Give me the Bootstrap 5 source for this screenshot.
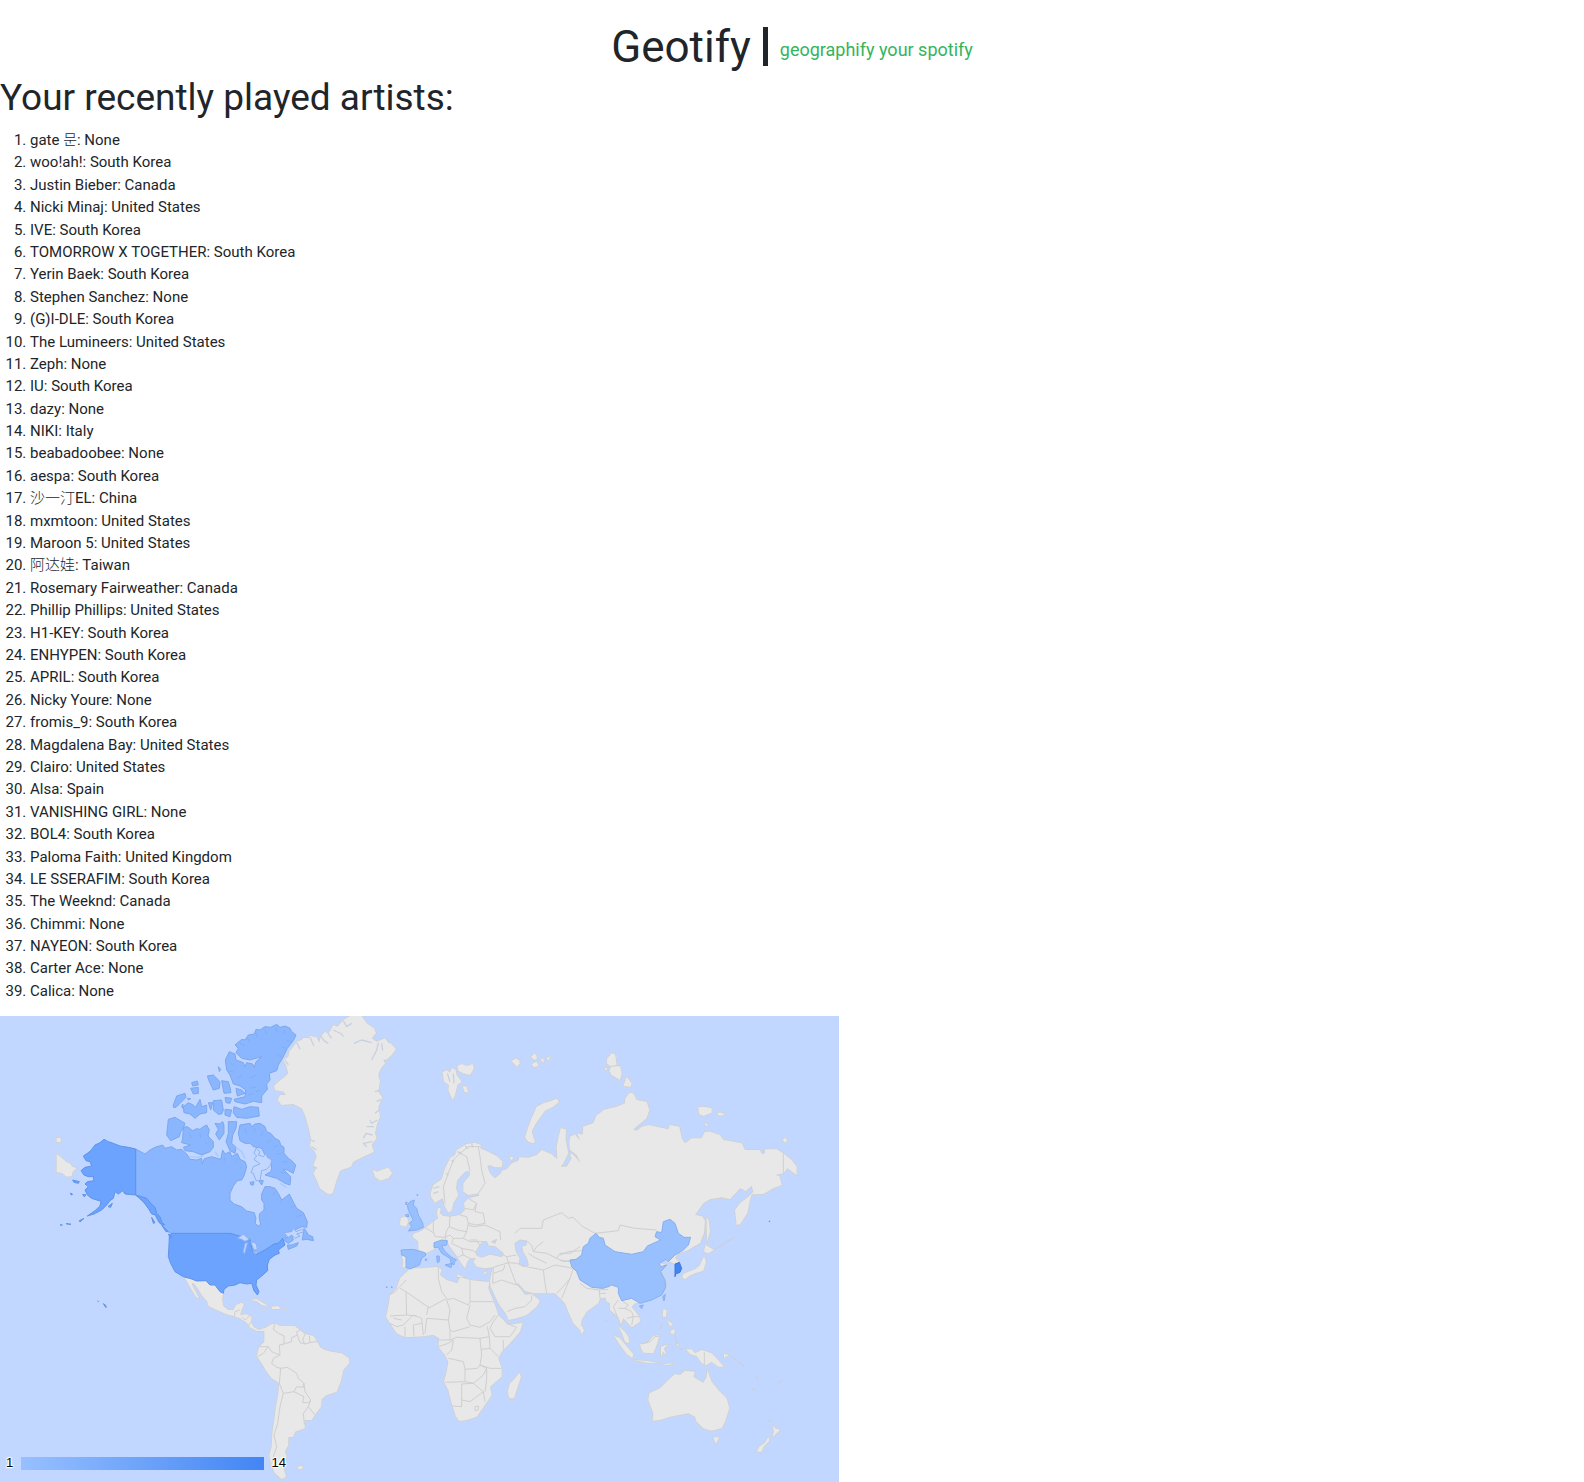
<!DOCTYPE html>
<html lang="en">
<head>
<meta charset="utf-8">
<meta name="viewport" content="width=device-width, initial-scale=1">
<title>Geotify</title>
<link href="https://cdn.jsdelivr.net/npm/bootstrap@5.3.0/dist/css/bootstrap.min.css" rel="stylesheet">
<style>
body{font-family:Roboto,"Noto Sans CJK KR","Noto Sans CJK SC",sans-serif;font-size:15px;line-height:22px;color:#212529}
.brand-bar{padding-top:20px;height:72px}
.brand-name{font-size:44px;line-height:54px;padding-top:2px}
.brand-rule{width:5px;height:39px;background:#212529;margin:0 12px}
.tagline{font-size:18px;line-height:24px;color:#34b45c;padding-top:8px}
.list-title{font-size:37px;line-height:44px;margin-bottom:9px;padding-top:4px}
.artist-list{padding-left:30px;min-height:873px;margin-bottom:14px}
.artist-list [lang=zh]{font-family:"Noto Sans CJK SC",sans-serif;font-weight:300;line-height:1}
.artist-list [lang=ko]{font-family:"Noto Sans CJK KR",sans-serif;font-weight:300;line-height:1}
.geo-map{max-width:839px;background:#c2d7ff}
.geo-map svg{display:block;width:100%;height:auto}
.coast{fill:#e8e8e8;stroke:#cfd0d3;stroke-width:5;stroke-linejoin:round}
.fill-land{fill:#e8e8e8}
.line{fill:none;stroke:#cfcfcf;stroke-width:3;stroke-linejoin:round}
.fjord{fill:none;stroke:#c8d0e0;stroke-width:4;stroke-linejoin:round}
.channel{fill:none;stroke:#a9c8ff;stroke-width:4;stroke-linejoin:round}
.inlet{fill:none;stroke:#7da7ec;stroke-width:2}
.sea{fill:#c2d7ff;stroke:#cfd0d3;stroke-width:3}
.lake{fill:#c2d7ff;stroke:#8fb2ec;stroke-width:3}
.ca{fill:#8ab6ff;stroke:#7da7ec;stroke-width:3;stroke-linejoin:round}
.us{fill:#6ba3ff;stroke:#5e93ea;stroke-width:3;stroke-linejoin:round}
.cn{fill:#98c0ff;stroke:#88afee;stroke-width:3;stroke-linejoin:round}
.kr{fill:#4285f4;stroke:#3c79de;stroke-width:3}
.legend-row{left:6px;bottom:12px;width:280px;gap:8px;font:13px/14px "Liberation Sans",sans-serif;color:#000}
.legend-row span{text-shadow:0 0 2px #fff,1px 1px 1px #fff,-1px -1px 1px #fff,1px -1px 1px #fff,-1px 1px 1px #fff}
.legend-scale{height:13px;background:linear-gradient(90deg,#98c0ff,#4285f4)}
</style>
<script src="https://cdn.jsdelivr.net/npm/bootstrap@5.3.0/dist/js/bootstrap.bundle.min.js"></script>
</head>
<body>
<header class="brand-bar d-flex justify-content-center">
  <div class="d-flex align-items-center">
    <h1 class="brand-name fw-normal mb-0">Geotify</h1>
    <div class="brand-rule"></div>
    <div class="tagline">geographify your spotify</div>
  </div>
</header>
<main>
<h2 class="list-title fw-normal">Your recently played artists:</h2>
<ol class="artist-list d-flex flex-column justify-content-between">
<li>gate <span lang="ko">문</span>: None</li>
<li>woo!ah!: South Korea</li>
<li>Justin Bieber: Canada</li>
<li>Nicki Minaj: United States</li>
<li>IVE: South Korea</li>
<li>TOMORROW X TOGETHER: South Korea</li>
<li>Yerin Baek: South Korea</li>
<li>Stephen Sanchez: None</li>
<li>(G)I-DLE: South Korea</li>
<li>The Lumineers: United States</li>
<li>Zeph: None</li>
<li>IU: South Korea</li>
<li>dazy: None</li>
<li>NIKI: Italy</li>
<li>beabadoobee: None</li>
<li>aespa: South Korea</li>
<li><span lang="zh">沙一汀</span>EL: China</li>
<li>mxmtoon: United States</li>
<li>Maroon 5: United States</li>
<li><span lang="zh">阿达娃</span>: Taiwan</li>
<li>Rosemary Fairweather: Canada</li>
<li>Phillip Phillips: United States</li>
<li>H1-KEY: South Korea</li>
<li>ENHYPEN: South Korea</li>
<li>APRIL: South Korea</li>
<li>Nicky Youre: None</li>
<li>fromis_9: South Korea</li>
<li>Magdalena Bay: United States</li>
<li>Clairo: United States</li>
<li>Alsa: Spain</li>
<li>VANISHING GIRL: None</li>
<li>BOL4: South Korea</li>
<li>Paloma Faith: United Kingdom</li>
<li>LE SSERAFIM: South Korea</li>
<li>The Weeknd: Canada</li>
<li>Chimmi: None</li>
<li>NAYEON: South Korea</li>
<li>Carter Ace: None</li>
<li>Calica: None</li>
</ol>
<div class="geo-map position-relative">
<svg viewBox="0 18 2517 1398" role="img" aria-label="World map of artists by country">
<defs>
<g id="land">
  <!-- Greenland, Iceland -->
  <g transform="translate(450 0)">
    <path d="M372 228 385 215 405 200 415 190 408 165 400 150 415 140 418 125 430 110 440 95 455 90 460 83 475 85 480 78 500 82 508 98 513 78 525 65 535 72 550 45 562 50 580 30 600 18 635 18 650 40 672 55 678 70 665 85 680 95 705 85 715 98 725 102 738 118 725 135 708 150 700 148 705 160 690 180 685 195 690 215 685 245 697 262 685 290 690 320 680 345 675 370 680 385 665 405 672 425 640 440 610 455 603 470 590 475 570 482 560 510 548 550 538 553 530 550 510 535 500 510 490 490 498 478 490 465 500 440 495 425 480 410 483 385 475 350 465 315 455 295 430 282 395 285 383 270 390 255 408 255 400 245 375 240ZM668 478 680 485 700 478 715 473 727 490 715 505 690 512 675 500Z"/>
  </g>
  <!-- Central and South America -->
  <g transform="translate(450 570)">
    <path d="M105 235 120 237 140 243 168 242 180 255 195 255 210 275 220 280 216 298 220 318 235 330 250 330 258 315 275 308 282 312 275 330 270 345 290 343 305 350 303 365 310 380 325 390 345 385 340 393 320 393 300 382 290 368 270 355 250 348 230 343 200 330 175 318 172 305 155 285 145 268 130 248 125 252 148 296 138 290 122 265Z"/>
    <path d="M300 300 320 297 355 318 335 315 320 303ZM365 320 385 318 392 326 365 328ZM335 328 345 328 345 330ZM402 326 410 327 408 330ZM443 800 460 798 455 807 445 808Z"/>
    <path d="M375 370 390 378 410 377 435 378 450 390 465 402 490 408 502 425 510 442 525 450 545 455 575 460 597 475 598 490 580 510 572 545 560 575 530 585 515 598 513 620 495 645 485 660 465 660 463 672 465 685 435 695 430 710 415 712 415 735 405 755 410 770 400 800 408 830 395 838 375 820 362 790 358 765 365 740 367 700 372 665 378 620 385 580 388 550 365 535 350 515 335 490 320 468 328 440 343 425 343 392 330 388 345 385 360 375Z"/>
  </g>
  <!-- Chukotka west of the date line -->
  <path d="M170 432 185 443 200 457 210 460 217 470 230 475 218 485 215 498 200 500 185 488 170 487ZM170 383 182 383 182 396 170 396Z"/>
  <!-- Europe, west Russia, Middle East, India -->
  <g transform="translate(1110 90)">
    <path d="M182 460 190 435 215 418 225 385 240 355 255 345 260 330 290 312 315 308 333 315 330 325 350 333 380 348 398 365 395 382 375 382 358 375 352 380 360 400 375 415 393 400 395 392 410 388 425 370 445 362 448 352 475 353 500 345 515 330 545 343 562 358 560 320 567 285 572 265 588 268 587 300 595 340 580 370 572 380 590 380 605 355 600 345 605 340 620 355 632 370 620 345 600 330 598 310 600 290 615 283 630 302 622 280 640 285 648 305 655 325 660 325 650 290 640 260 670 250 680 225 720 205 760 260 760 700 720 770 690 775 685 790 650 815 635 840 630 870 610 850 595 815 585 790 570 775 555 760 530 760 490 760 465 753 445 730 438 732 455 750 465 765 485 762 490 765 510 782 500 800 470 825 440 835 415 840 410 825 385 790 362 740 360 725 365 695 370 682 345 685 320 680 310 665 318 655 300 655 292 665 285 685 275 672 262 650 240 620 232 605 195 610 192 628 168 640 145 635 145 605 128 590 130 582 155 572 170 560 190 545 205 535 200 520 205 503 212 505 210 520 220 528 240 530 270 525 285 510 282 490 295 475 328 467 325 460 295 465 280 455 280 430 300 405 298 392 285 395 262 420 258 445 265 465 250 490 245 512 235 518 225 500 218 475 195 488 183 470Z"/>
    <path d="M92 535 110 528 115 545 108 560 90 555ZM95 643 108 645 108 682 97 682 100 665Z"/>
    <path d="M218 97 230 90 240 98 245 85 256 88 260 105 275 125 262 135 255 165 248 180 235 150 237 135 222 125ZM262 78 275 72 290 78 308 72 312 85 300 105 280 100 265 92ZM278 137 290 140 295 158 283 155ZM425 62 440 55 450 70 440 80ZM483 50 495 40 502 55 492 60ZM485 72 500 65 505 78 492 82ZM510 60 520 55 522 68ZM530 55 542 48 535 62Z"/>
    <path d="M465 292 475 260 485 235 500 200 520 190 545 182 560 176 567 185 550 200 525 212 505 240 495 255 485 275 495 305 490 310 475 305ZM418 350 430 352 425 362ZM260 703 285 712 262 710ZM338 700 352 694 345 703ZM628 863 635 855 642 872 635 882Z"/>
  </g>
  <!-- Africa -->
  <g transform="translate(1110 690)">
    <path d="M110 95 120 85 155 85 205 80 215 90 210 105 230 120 262 130 270 112 300 120 345 125 358 125 355 145 375 195 385 225 405 245 415 255 458 248 450 275 420 310 395 335 385 355 395 385 395 410 360 440 365 465 345 495 320 530 290 540 268 543 258 530 245 490 235 450 222 425 230 395 235 365 225 345 205 320 208 295 190 285 165 288 140 290 105 292 80 280 60 250 48 230 55 200 60 165 80 145 90 115ZM448 398 453 410 440 450 432 475 418 475 413 455 420 430 435 415Z"/>
  </g>
  <!-- Siberia -->
  <g transform="translate(1530 0)">
    <path d="M555 615 580 580 600 568 635 562 660 568 690 535 703 540 705 545 725 527 730 545 715 560 690 580 675 600 680 645 690 643 712 610 720 570 725 553 760 552 790 535 815 525 808 498 795 495 820 490 832 475 860 495 860 470 845 450 820 430 800 418 765 418 765 430 755 432 750 420 705 420 695 400 640 390 630 375 600 365 585 365 575 385 545 385 525 400 515 385 508 350 480 345 475 358 440 350 415 345 395 350 380 362 370 358 410 325 418 300 410 275 380 270 370 250 358 248 345 268 345 280 320 290 280 300 258 320 258 338 220 350 200 560 300 720 550 700 580 620Z"/>
    <path d="M292 145 305 130 315 132 320 165 300 168 290 160ZM303 170 330 168 335 190 330 210 305 195 298 182ZM340 228 350 200 365 220 362 230ZM565 292 580 290 605 295 605 308 580 318 567 312ZM620 308 635 308 645 315 628 317ZM583 340 593 342 590 350ZM818 390 825 383 832 390 825 398ZM282 175 290 173 292 182ZM15 152 30 150 22 165Z"/>
  </g>
  <!-- East and South-East Asia, Oceania -->
  <g transform="translate(1680 570)">
    <path d="M120 295 135 290 140 305 150 310 150 330 168 345 178 360 182 385 195 395 205 410 208 430 195 425 188 405 178 385 190 355 200 365 215 382 240 365 238 350 215 320 225 310 240 308 275 298 305 282 318 260 317 240 300 205 320 195 300 190 300 180 320 178 330 185 345 192 360 187 345 175 355 160 370 155 385 150 400 140 420 130 432 100 435 60 425 50 405 45 300 0 0 0 0 250 60 300Z"/>
    <path d="M440 52 446 60 450 95 441 125 440 90ZM432 155 436 135 443 138 462 150 445 160ZM432 168 438 185 430 212 405 220 388 227 375 238 367 232 370 222 385 215 405 208 420 195ZM162 407 180 415 205 445 220 462 217 475 200 462 180 435ZM222 480 260 483 300 490 265 489ZM310 492 345 490 320 496ZM240 432 260 430 280 408 298 405 292 430 280 460 250 458 243 445ZM303 440 325 433 312 445 320 468 310 455 303 470ZM310 328 320 330 318 350 308 350ZM335 390 345 388 342 402 330 400ZM322 360 338 372 330 380ZM378 448 395 448 405 460 425 450 455 460 470 475 492 500 475 500 455 485 440 495 425 490 410 468 390 462ZM492 462 508 465 492 473ZM350 430 356 432 352 440Z"/>
    <path d="M268 580 300 565 325 540 345 522 360 525 375 512 405 515 400 530 430 548 440 530 442 510 455 545 475 570 500 595 508 625 495 665 485 685 455 692 430 685 410 665 405 650 385 640 330 650 300 660 278 662 280 640 265 600ZM460 712 478 712 467 732ZM638 675 645 685 660 690 650 700 637 712 642 695ZM625 710 628 722 610 740 605 755 590 755 598 740 615 728Z"/>
  </g>
</g>
</defs>
<use href="#land" class="coast"/>
<use href="#land" class="fill-land"/>

<!-- Fjords and small islands -->
<g class="fjord">
  <path transform="translate(450 0)" d="M480 82 492 108M513 78 522 92 535 100M535 72 545 85M550 60 575 72 580 80M580 32 590 50 605 40M612 100 635 90 665 98M665 150 680 120 685 98M695 100 698 122M440 97 450 118M405 150 415 165M690 240 675 245M692 268 680 275M688 300 675 310M682 330 665 340 660 330M672 350 650 350M668 375 648 370 640 385M668 395 640 400 650 410M482 390 495 395M484 410 500 420M490 470 502 475"/>
  <path transform="translate(1110 90)" d="M232 100 240 125M250 100 252 130M190 460 205 455M190 445 208 440M228 400 236 405M245 360 252 365M262 335 275 340M285 318 295 325M305 310 308 322"/>
  <path transform="translate(1680 570)" d="M465 148 490 132 522 112M515 470 530 482M535 485 552 500M588 530 596 538M575 565 588 572M655 550 668 540M300 385 308 370M345 405 352 432M358 450 370 446M138 360 142 366M625 660 632 666"/>
</g>

<!-- Inland seas -->
<g class="sea" transform="translate(1110 90)">
  <path d="M320 645 318 635 330 615 340 605 350 605 355 618 375 620 400 640 395 650 360 642 335 652ZM435 610 450 600 470 603 468 615 455 618 458 635 470 655 475 675 460 680 448 672 450 655 438 632ZM365 605 380 598 375 610Z"/>
</g>

<!-- Borders -->
<g class="line">
  <path transform="translate(450 570)" d="M375 370 370 388 385 400 402 408 402 432 425 425 425 413 442 405M442 405 440 395 450 390M442 405 450 428 465 432M465 402 458 420 465 432 480 428 478 408M480 428 495 425 502 425M402 432 388 435 390 465 365 455 355 440 328 440M355 440 340 460 322 470M390 465 370 475 365 490 380 502 392 505M392 505 388 550M392 505 412 502 440 520 445 535 462 550 460 562 440 560 432 575 400 580 388 550M432 575 462 590 458 608 475 608 482 600 465 575 462 550M482 600 475 620 460 640 463 672M475 620 495 645M400 580 390 620 383 670 372 705 380 740 370 770 365 790M253 350 255 335 270 330M275 350 285 360 303 345M295 378 303 365"/>
  <path transform="translate(1110 90)" d="M225 490 220 440 235 400 250 360 270 340 295 320 330 320M265 338 290 350 300 392M325 320 330 350 335 390 345 430 325 460M295 475 320 490 310 510 285 505M320 490 315 515 340 520 345 550 320 555 295 550 290 530 270 525M240 530 238 560 262 570 290 575 295 550M190 545 190 575 195 590 225 592 230 572 238 560M165 562 190 578M295 555 310 560 345 555 390 575 392 600M290 575 280 595 300 605 340 605M280 595 250 595 240 585 225 592 230 605M250 595 245 610 275 625 280 645 265 650M275 625 310 632 320 640M300 600 320 600 330 618M280 645 300 655M390 640 410 650 440 645M410 650 415 668 370 682M415 668 440 670 470 680 520 690M415 668 430 710 440 735M370 682 368 730M370 700 400 690 405 675M368 730 395 720 440 735M412 815 435 805 465 800 485 780 485 765M470 603 485 615 490 635 530 640 560 655 570 640 600 640 630 620M520 690 525 730 530 760M520 690 555 675 610 685 600 715 580 740 560 760M490 635 500 620 520 605M475 640 490 650 530 670M560 655 580 665 610 660M610 685 625 700 640 725 690 745 720 740M575 775 600 715"/>
  <path transform="translate(1110 690)" d="M108 120 75 155 58 165M108 155 110 225 60 228M108 155 165 195 175 200 170 225M108 155 90 145M205 80 205 115 215 155 230 175 175 205M300 120 300 185 370 185M300 185 295 195 250 175 230 180 240 210 235 240 170 235 165 280M300 195 290 235 300 255 330 262 360 245 375 225M235 240 240 270 250 275 300 260M240 270 240 300 208 300M240 300 260 292 330 295 358 290 352 260M330 295 335 345 330 375 322 385 285 388 280 365 250 358 235 355M385 225 370 245 360 265 375 290 420 290 440 262 410 250M358 290 360 325 385 350M360 325 335 328M400 300 400 330M285 388 285 425 225 427M285 425 310 430 340 405 350 385 330 375M330 375 360 385 395 385M275 432 275 500 248 498M275 432 310 430 340 455 320 470 300 485 275 480M340 455 345 485M350 385 350 420 345 455M315 500 325 498 325 510 315 512ZM60 250 80 260 100 255 130 225 155 235 160 285M105 292 105 260M132 290 130 255 155 250M70 235 95 240M205 320 235 310 250 300 245 330 230 345M110 225 140 228"/>
  <path transform="translate(1530 0)" d="M820 430V490M15 670 30 655 95 655 100 630 155 608 175 625 190 622 215 648 255 670 325 662 330 645 375 655 440 660"/>
  <path transform="translate(1680 570)" d="M60 250 80 265 118 270 120 295M118 270 145 268M118 280 138 280M175 300 160 320 170 345 182 375M185 302 205 315 195 325 215 335 220 350 238 350M175 325 195 325M200 355 220 350 215 375M433 457V492M245 432 270 425 285 410 298 408M0 165 25 155 65 152M0 180 30 185"/>
</g>

<!-- Canada -->
<g class="ca" transform="translate(450 0)">
  <path d="M-43 417-15 432 0 420 15 412 38 405 45 415 65 410 80 420 95 418 110 432 120 448 140 450 155 445 157 462 163 446 185 440 212 448 215 435 218 420 225 432 240 425 245 440 262 430 270 448 285 455 290 470 283 495 275 510 262 512 250 528 240 550 240 570 252 582 275 590 290 603 313 608 318 625 315 640 325 648 332 643 328 625 328 612 342 600 342 580 335 570 335 552 345 530 360 530 375 535 385 550 395 570 408 560 418 552 432 580 440 595 460 608 472 635 470 652 455 650 430 662 412 668 405 685 425 675 430 690 415 700 400 690 380 708 345 725 320 738 305 712 300 692 262 678 240 672 65 672 55 665 40 650 25 635 15 615 0 600-15 580-43 555Z"/>
  <path d="M462 655 470 665 475 675 488 680 490 692 470 688 457 690ZM412 705 425 705 445 698 440 708 415 718Z"/>
  <path d="M255 105 275 88 285 90 295 75 313 72 318 58 330 60 345 50 362 52 380 43 390 52 405 48 420 55 425 65 438 75 430 92 412 115 400 140 385 165 380 182 358 190 360 210 350 222 352 238 335 258 335 278 310 274 285 282 255 275 252 268 285 260 287 240 270 228 250 222 240 195 230 180 226 150 238 125 255 132 258 150 280 158 285 170 290 158 308 162 313 172 318 155 335 140 300 150 275 145 258 128 265 115Z"/>
  <path d="M270 345 300 340 305 350 315 342 330 340 345 350 350 365 362 370 375 385 388 392 392 405 402 412 402 430 415 445 425 452 437 465 430 490 412 480 400 478 422 500 420 525 405 520 380 505 345 495 362 485 365 475 362 450 345 435 335 415 310 410 300 400 285 400 270 392 265 370Z"/>
  <path d="M100 352 112 350 128 362 140 356 150 358 160 350 170 345 178 360 174 378 190 395 190 412 180 425 155 435 130 425 105 422 100 412 122 405 95 398 98 385ZM55 328 75 322 105 340 100 355 92 365 88 380 62 392 50 375ZM195 340 208 342 218 335 222 345 222 370 208 390 197 372 205 358ZM235 335 260 335 258 355 248 375 245 400 258 412 255 430 240 422 228 395 235 370ZM252 290 275 298 300 290 325 292 328 318 290 325 260 322 250 308ZM100 290 115 278 130 285 137 292 150 268 155 290 170 285 170 308 150 312 135 325 120 312 102 308ZM70 285 80 258 105 250 108 262 90 280 78 292 70 292ZM125 218 142 213 145 225 128 228ZM122 235 145 232 145 250 130 252ZM172 198 190 195 210 215 208 235 190 240 178 215ZM215 212 235 215 240 232 243 248 222 250ZM205 170 212 178 208 185ZM190 272 215 270 220 300 215 312 205 313 190 300ZM225 298 245 300 240 320 225 315ZM225 262 245 265 240 280 228 278ZM175 278 188 278 182 300ZM258 235 275 240 285 250 262 258ZM300 517 312 515 310 525 303 525ZM325 510 340 512 335 525ZM113 265 122 266 115 270ZM95 288 99 282 98 295Z"/>
</g>
<g transform="translate(450 0)">
  <path class="inlet" d="M270 100 285 108M292 85 300 98M318 68 322 82M345 60 350 72M378 52 380 66M405 60 398 72M425 95 408 92M408 115 392 110M395 140 380 132M240 160 250 165M238 185 252 182M262 205 275 198M300 205 318 195M300 235 320 230M295 255 310 250M330 240 318 245M285 355 288 370M312 352 316 368M340 365 332 378M365 390 352 395M385 405 372 412M395 430 380 432M412 455 398 456M405 490 392 486M118 370 125 385M150 370 152 382M165 395 172 402M225 440 222 455M262 445 258 458M275 470 268 478M375 545 370 556M395 572 388 580M432 590 422 596M455 615 442 620"/>
  <path class="channel" d="M118 440 145 442 160 438M195 425 205 440M258 412 275 425 285 445M390 520 410 532"/>
</g>
<g class="lake" transform="translate(450 0)">
  <path d="M318 415 330 425 325 435 340 440 348 430 352 442 365 450 362 465 350 478 335 482 330 512 318 512 310 490 303 488 310 470 330 462 312 448 320 438 312 430Z"/>
</g>

<!-- United States -->
<g class="us">
  <path transform="translate(450 570)" d="M65 100H240L262 106 275 110 300 118 303 135 308 155 320 163 345 150 372 132 385 130 398 115 405 135 385 150 388 160 375 165 358 178 352 195 353 212 335 228 320 240 318 255 327 275 322 285 312 272 305 250 290 252 270 248 255 255 235 258 222 268 220 280 210 275 195 255 180 255 168 242 140 243 120 235 100 230 75 215 62 190 55 170 57 135 58 108Z"/>
  <path d="M407 417 385 412 360 408 340 400 325 395 312 388 300 398 285 405 272 422 262 430 250 438 258 452 270 455 275 468 255 472 243 482 252 495 265 500 280 500 282 512 262 515 255 522 265 530 255 540 262 555 275 565 290 570 303 573 300 588 285 602 262 618 282 612 305 600 320 585 330 572 340 565 345 545 355 552 368 542 375 552 407 555 425 560 440 565 452 580 465 592 470 610 480 620 486 638 495 645 480 640 468 615 455 612 445 595 430 575 407 555ZM238 632 252 625 240 636ZM218 510 238 515 235 520 222 517ZM324 590 337 580 332 592ZM248 553 258 555 252 560ZM212 549 218 553 213 555ZM180 645 187 645ZM198 641 213 643ZM310 881 318 887 318 893ZM293 873 296 875ZM505 672 515 678 512 685ZM455 622 465 638 460 640ZM485 645 505 665 498 665Z"/>
  <path d="M2307 634 2309 633V636Z"/>
</g>
<g class="lake" transform="translate(450 570)">
  <path d="M262 115 280 103 298 118 285 124 275 118ZM285 130 293 128 284 160 279 158ZM302 125 318 130 322 148 312 150ZM310 157 325 155 318 162ZM402 98 425 95 430 85 438 95 455 88 462 95 440 102 450 108 435 115 425 105 415 112Z"/>
</g>

<!-- China, Taiwan, Spain, Italy, United Kingdom -->
<g class="cn">
  <path transform="translate(1680 570)" d="M30 180 48 178 65 165 70 140 85 130 90 115 108 100 118 112 130 115 135 135 165 155 215 163 250 155 262 138 302 120 285 110 290 95 305 98 310 65 330 58 345 70 355 100 372 112 392 112 385 135 370 150 345 165 325 185 318 178 298 190 302 200 320 195 302 215 315 240 317 262 305 285 275 300 240 310 215 295 185 302 175 280 175 262 155 255 130 265 95 262 60 240 50 215 35 200ZM308 290 316 283 312 303ZM238 318 250 315 245 326Z"/>
  <path transform="translate(1110 90)" d="M93 630 130 628 165 638 168 645 155 655 148 675 120 687 108 682 108 650 95 645ZM192 608 215 600 232 602 230 615 215 618 225 635 245 652 260 660 253 665 252 675 243 668 240 655 215 640 205 622 192 622ZM225 675 247 670 243 683ZM200 648 208 648 208 665 202 668ZM165 658 170 657 168 663ZM120 485 133 480 130 495 140 505 145 525 158 548 160 562 140 570 115 573 125 560 118 550 130 540 122 525 115 510 112 495ZM106 525 115 522 117 530 108 530ZM141 463 144 465 142 468ZM107 487 112 487 108 495ZM49 740 52 741 50 744ZM64 740 67 741 65 744Z"/>
</g>
<path class="kr" transform="translate(1680 570)" d="M345 192 358 187 365 205 360 217 347 222 345 230Z"/>
</svg>
<div class="legend-row position-absolute d-flex align-items-center">
  <span>1</span><div class="legend-scale flex-fill"></div><span>14</span>
</div>
</div>
</main>
</body>
</html>
